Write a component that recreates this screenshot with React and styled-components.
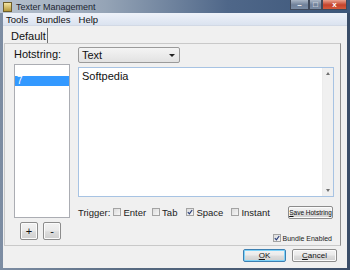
import React from "react"
import styled, { createGlobalStyle } from "styled-components"

const GlobalStyle = createGlobalStyle`
  html, body {
    margin: 0;
    padding: 0;
    background: #2e3a4c;
  }
  body {
    font-family: "Liberation Sans", Arial, sans-serif;
  }
`

const Window = styled.div`
  width: 350px;
  height: 270px;
  display: flex;
  flex-direction: column;
  background: linear-gradient(90deg, #7d8da3 0%, #55687f 40%, #3a4d68 100%);
  overflow: hidden;
`
const TitleBar = styled.div`
  height: 13px;
  display: flex;
  align-items: center;
  padding-left: 3px;
  position: relative;
  background: linear-gradient(90deg, #b9c3cf 0%, #95a4b6 30%, #4f6789 65%, #3c5679 100%);
`
const AppIcon = styled.div`
  width: 7px;
  height: 8px;
  background: linear-gradient(#f4e5a2, #b79a3a);
  border: 1px solid #6d5d2a;
  margin-right: 4px;
`
const Title = styled.span`
  font-size: 9px;
  color: #1c2430;
`
const Controls = styled.div`
  position: absolute;
  top: 0;
  right: 3px;
  display: flex;
  height: 10px;
`
const Ctrl = styled.div`
  width: ${p => p.w}px;
  height: 10px;
  box-sizing: border-box;
  border: 1px solid #40495a;
  border-top: none;
  background: ${p => p.close ? "linear-gradient(#e9a390, #c4432b 55%, #d35b3c)" : "linear-gradient(#aab6c6, #6f8099 55%, #7a8ca5)"};
  display: flex;
  align-items: center;
  justify-content: center;
  color: #fff;
  font-size: 8px;
  font-weight: bold;
  line-height: 1;
`
const Client = styled.div`
  flex: 1;
  margin: 0 3px 2px 3px;
  background: #f0f0f0;
  display: flex;
  flex-direction: column;
`
const MenuBar = styled.div`
  height: 12px;
  display: flex;
  align-items: center;
  gap: 8px;
  padding-left: 3px;
  background: linear-gradient(#eef2f9, #dbe3f0);
  border-bottom: 1px solid #d2d9e5;
  font-size: 9.5px;
  color: #111;
`
const TabStrip = styled.div`
  height: 17px;
  display: flex;
  align-items: flex-end;
  padding-left: 6px;
`
const Tab = styled.div`
  height: 15px;
  padding: 0 1px 0 2px;
  border-right: 1px solid #6f6f6f;
  font-size: 11px;
  color: #111;
  display: flex;
  align-items: center;
`
const Panel = styled.div`
  height: 203px;
  margin: 0 6px 0 1px;
  border: 1px solid #c9c9c9;
  border-right-color: #8e8e8e;
  box-sizing: border-box;
  display: flex;
  gap: 8px;
  padding: 3px 0 0 9px;
`
const LeftCol = styled.div`
  width: 56px;
  display: flex;
  flex-direction: column;
`
const Label = styled.div`
  font-size: 11px;
  color: #111;
  height: 13px;
  margin: 1px 0 3px 0;
`
const ListBox = styled.div`
  height: 154px;
  box-sizing: border-box;
  border: 1px solid #abadb3;
  background: #fff;
  padding-top: 11px;
`
const ListItem = styled.div`
  height: 10px;
  background: ${p => p.selected ? "#3399ff" : "transparent"};
  color: ${p => p.selected ? "#fff" : "#000"};
  font-size: 10px;
  line-height: 10px;
  padding-left: 2px;
`
const SmallButtons = styled.div`
  display: flex;
  gap: 5px;
  margin: 4px 0 0 6px;
`
const Button = styled.button`
  width: ${p => p.w}px;
  height: ${p => p.h}px;
  padding: 0;
  box-sizing: border-box;
  border: 1px solid ${p => p.primary ? "#3c7fb1" : "#8c8c8c"};
  border-radius: 2px;
  background: linear-gradient(#f2f2f2 0%, #ebebeb 45%, #dddddd 55%, #cfcfcf 100%);
  font-family: "Liberation Sans", Arial, sans-serif;
  font-size: ${p => p.fs || 8}px;
  white-space: nowrap;
  color: #111;
  display: flex;
  align-items: center;
  justify-content: center;
  box-shadow: ${p => p.primary ? "inset 0 0 0 1px #7fd3f9" : "inset 0 0 0 1px #fbfbfb"};
`
const RightCol = styled.div`
  width: 256px;
  display: flex;
  flex-direction: column;
`
const Select = styled.div`
  width: 102px;
  height: 16px;
  box-sizing: border-box;
  border: 1px solid #9a9a9a;
  border-radius: 2px;
  background: linear-gradient(#f4f4f4, #e2e2e2);
  display: flex;
  align-items: center;
  justify-content: space-between;
  padding: 0 4px 0 3px;
  font-size: 11px;
  color: #111;
`
const Caret = styled.span`
  width: 0;
  height: 0;
  border-left: 3px solid transparent;
  border-right: 3px solid transparent;
  border-top: 3px solid #222;
`
const TextArea = styled.div`
  height: 130px;
  margin-top: 4px;
  box-sizing: border-box;
  border: 1px solid #a7c3e3;
  background: #fff;
  display: flex;
`
const TextBody = styled.div`
  flex: 1;
  font-size: 11px;
  color: #111;
  padding: 2px 3px;
`
const ScrollBar = styled.div`
  width: 10px;
  background: #f0f0f0;
  border-left: 1px solid #ececec;
  display: flex;
  flex-direction: column;
  justify-content: space-between;
  align-items: center;
  padding: 4px 0;
`
const Arrow = styled.span`
  width: 0;
  height: 0;
  border-left: 2.5px solid transparent;
  border-right: 2.5px solid transparent;
  ${p => p.up ? "border-bottom: 3px solid #707070;" : "border-top: 3px solid #707070;"}
`
const TriggerRow = styled.div`
  height: 14px;
  margin-top: 8px;
  display: flex;
  align-items: center;
  font-size: 9.5px;
  color: #222;
`
const Check = styled.label`
  display: flex;
  align-items: center;
  gap: 2px;
  margin-left: ${p => p.ml || 0}px;
  font-size: ${p => p.fs || 9.5}px;
  color: #222;
  white-space: nowrap;
`
const Box = styled.span`
  width: 8px;
  height: 8px;
  box-sizing: border-box;
  border: 1px solid #a3a3a3;
  background: linear-gradient(135deg, #dcdcdc, #f6f6f6);
  display: flex;
  align-items: center;
  justify-content: center;
`
const BundleRow = styled.div`
  display: flex;
  justify-content: flex-end;
  margin: 15px 2px 0 0;
`
const Footer = styled.div`
  flex: 1;
  display: flex;
  justify-content: flex-end;
  gap: 6px;
  padding: 3px 10px 0 0;
`

const Tick = () => (
  <svg width="6" height="6" viewBox="0 0 6 6">
    <path d="M0.8 3.2 L2.4 4.8 L5.2 1" fill="none" stroke="#2a3f7a" strokeWidth="1.2" />
  </svg>
)

const CheckBox = ({ label, checked, ml, fs }) => (
  <Check ml={ml} fs={fs}>
    <Box>{checked && <Tick />}</Box>
    {label}
  </Check>
)

const App = () => (
  <>
    <GlobalStyle />
    <Window>
      <TitleBar>
        <AppIcon />
        <Title>Texter Management</Title>
        <Controls>
          <Ctrl w={19}>&#8211;</Ctrl>
          <Ctrl w={13}>&#9633;</Ctrl>
          <Ctrl w={25} close>x</Ctrl>
        </Controls>
      </TitleBar>
      <Client>
        <MenuBar>
          <span>Tools</span>
          <span>Bundles</span>
          <span>Help</span>
        </MenuBar>
        <TabStrip>
          <Tab>Default</Tab>
        </TabStrip>
        <Panel>
          <LeftCol>
            <Label>Hotstring:</Label>
            <ListBox>
              <ListItem selected>7</ListItem>
            </ListBox>
            <SmallButtons>
              <Button w={18} h={18} fs={11}>+</Button>
              <Button w={18} h={18} fs={11}>-</Button>
            </SmallButtons>
          </LeftCol>
          <RightCol>
            <Select>
              Text
              <Caret />
            </Select>
            <TextArea>
              <TextBody>Softpedia</TextBody>
              <ScrollBar>
                <Arrow up />
                <Arrow />
              </ScrollBar>
            </TextArea>
            <TriggerRow>
              Trigger:
              <CheckBox label="Enter" ml={3} />
              <CheckBox label="Tab" ml={6} />
              <CheckBox label="Space" checked ml={9} />
              <CheckBox label="Instant" ml={8} />
              <Button w={45} h={13} fs={6.5} style={{ marginLeft: "auto", marginRight: 1 }}><u>S</u>ave Hotstring</Button>
            </TriggerRow>
            <BundleRow>
              <CheckBox label="Bundle Enabled" checked fs={7} />
            </BundleRow>
          </RightCol>
        </Panel>
        <Footer>
          <Button w={43} h={13} primary><u>O</u>K</Button>
          <Button w={45} h={13}><u>C</u>ancel</Button>
        </Footer>
      </Client>
    </Window>
  </>
)

export default App
